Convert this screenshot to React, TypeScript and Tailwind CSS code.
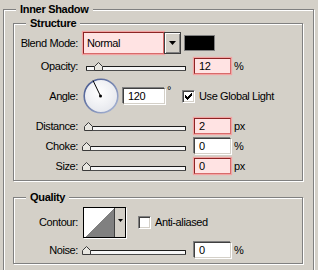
import React from 'react';

// Photoshop "Inner Shadow" layer style panel (classic Windows look)

const Thumb: React.FC<{ x: number }> = ({ x }) => (
  <svg width="9" height="9" viewBox="0 0 9 9" className="absolute top-[4px]" style={{ left: x }}>
    <path d="M4.5 0.5 L8.5 4.5 L8.5 8.5 L0.5 8.5 L0.5 4.5 Z" fill="#e8e6e0" stroke="#3a3a3a" strokeWidth="1" />
  </svg>
);

const Slider: React.FC<{ pos: number }> = ({ pos }) => (
  <div className="relative ml-[4px] w-[108px] self-stretch">
    <div className="mt-[8px] mx-[4px] h-[5px] border border-[#1c1c1c] border-b-[#4a4a4a] bg-[#f6f6f6] rounded-[1px]" />
    <Thumb x={pos} />
  </div>
);

const Field: React.FC<{ value: string; warn?: boolean; wide?: boolean }> = ({ value, warn, wide }) => (
  <div
    className={`${wide ? 'w-[42px]' : 'w-[37px]'} h-[16px] flex items-center pl-[4px] border ${
      warn
        ? 'bg-[#ffe3e3] border-t-[#8c2424] border-l-[#8c2424] border-r-[#d86a6a] border-b-[#d86a6a] shadow-[0_0_1px_1px_#f2a3a3]'
        : 'bg-white border-t-[#404040] border-l-[#404040] border-r-[#d4d0c8] border-b-[#d4d0c8] shadow-[-1px_-1px_0_#808080,1px_1px_0_#fff]'
    }`}
  >
    {value}
  </div>
);

const Check: React.FC<{ checked?: boolean }> = ({ checked }) => (
  <div className="w-[13px] h-[13px] flex items-center justify-center bg-white border border-t-[#808080] border-l-[#808080] border-r-white border-b-white shadow-[inset_1px_1px_0_#404040,inset_-1px_-1px_0_#d4d0c8]">
    {checked && (
      <svg width="7" height="7" viewBox="0 0 7 7" shapeRendering="crispEdges">
        <path d="M0 2 L2 4 L6 0 L7 0 L7 2 L2 7 L0 5 Z" fill="#000" />
      </svg>
    )}
  </div>
);

const Label: React.FC<{ children: React.ReactNode }> = ({ children }) => (
  <span className="w-[64px] shrink-0 text-right">{children}</span>
);

const Group: React.FC<{ title: string; className: string; children: React.ReactNode }> = ({ title, className, children }) => (
  <fieldset className={`border border-[#808080] shadow-[inset_1px_1px_0_#fff,1px_1px_0_#fff] ${className}`}>
    <legend className="ml-[12px] px-[4px] bg-[#d4d0c8] font-bold leading-[14px] tracking-[-0.3px]">{title}</legend>
    {children}
  </fieldset>
);

const Dial = () => (
  <svg width="36" height="36" viewBox="0 0 36 36">
    <defs>
      <linearGradient id="ring" x1="0" y1="0" x2="1" y2="1">
        <stop offset="0" stopColor="#40528a" />
        <stop offset="1" stopColor="#aebbd9" />
      </linearGradient>
      <radialGradient id="face" cx="0.45" cy="0.4" r="0.65">
        <stop offset="0" stopColor="#ffffff" />
        <stop offset="1" stopColor="#e4e6ec" />
      </radialGradient>
    </defs>
    <circle cx="18" cy="18" r="16.8" fill="url(#face)" stroke="url(#ring)" strokeWidth="1.6" />
    <line x1="17.5" y1="18" x2="10" y2="2.5" stroke="#000" strokeWidth="1" />
    <circle cx="17.5" cy="18" r="1.5" fill="#000" />
  </svg>
);

const App: React.FC = () => {
  return (
    <div className="w-[318px] h-[270px] overflow-hidden bg-[#d4d0c8] text-black text-[11px] tracking-[-0.4px] font-['Liberation_Sans',Arial,sans-serif] pt-[2px] pl-[3px]">
      <Group title="Inner Shadow" className="w-[311px] pb-[20px]">
        <Group title="Structure" className="ml-[9px] w-[290px]">
          <div className="flex flex-col gap-[4px] pt-[2px] pb-[6px]">
            <div className="flex items-center h-[22px]">
              <Label>Blend Mode:</Label>
              <div className="ml-[5px] flex w-[98px] h-[22px]">
                <div className="flex-1 flex items-center pl-[3px] bg-[#ffe3e3] border border-t-[#8c2424] border-l-[#8c2424] border-r-[#d86a6a] border-b-[#d86a6a] shadow-[0_0_1px_1px_#f2a3a3]">
                  Normal
                </div>
                <div className="w-[17px] flex items-center justify-center bg-[#d4d0c8] border border-[#404040] shadow-[inset_1px_1px_0_#fff,inset_-1px_-1px_0_#808080]">
                  <svg width="7" height="4" viewBox="0 0 7 4">
                    <polygon points="0,0 7,0 3.5,4" fill="#000" />
                  </svg>
                </div>
              </div>
              <div className="ml-[3px] w-[31px] h-[16px] bg-black border border-[#808080]" />
            </div>

            <div className="flex items-center h-[16px]">
              <Label>Opacity:</Label>
              <Slider pos={12} />
              <div className="ml-[4px]"><Field value="12" warn /></div>
              <span className="ml-[3px]">%</span>
            </div>

            <div className="flex items-center h-[36px]">
              <Label>Angle:</Label>
              <div className="ml-[5px]"><Dial /></div>
              <div className="ml-[4px]"><Field value="120" wide /></div>
              <span className="ml-[2px] w-[14px] self-start mt-[7px] leading-[11px]">°</span>
              <div className="ml-[1px]"><Check checked /></div>
              <span className="ml-[4px]">Use Global Light</span>
            </div>

            <div className="flex items-center h-[16px]">
              <Label>Distance:</Label>
              <Slider pos={2} />
              <div className="ml-[4px]"><Field value="2" warn /></div>
              <span className="ml-[3px]">px</span>
            </div>

            <div className="flex items-center h-[16px]">
              <Label>Choke:</Label>
              <Slider pos={0} />
              <div className="ml-[4px]"><Field value="0" /></div>
              <span className="ml-[3px]">%</span>
            </div>

            <div className="flex items-center h-[16px]">
              <Label>Size:</Label>
              <Slider pos={0} />
              <div className="ml-[4px]"><Field value="0" warn /></div>
              <span className="ml-[3px]">px</span>
            </div>
          </div>
        </Group>

        <Group title="Quality" className="ml-[9px] mt-[9px] w-[290px]">
          <div className="flex flex-col gap-[4px] pt-[3px] pb-[5px]">
            <div className="flex items-center h-[31px]">
              <Label>Contour:</Label>
              <div className="ml-[5px] flex w-[43px] h-[31px] border border-black bg-[#d4d0c8] shadow-[1px_1px_0_#fff]">
                <svg width="30" height="29" viewBox="0 0 30 29" shapeRendering="crispEdges">
                  <rect x="0" y="0" width="30" height="29" fill="#fff" />
                  <polygon points="2,29 30,0 30,29" fill="#808080" />
                </svg>
                <div className="flex-1 flex justify-center pt-[11px] border-l border-[#404040]">
                  <svg width="5" height="3" viewBox="0 0 5 3">
                    <polygon points="0,0 5,0 2.5,3" fill="#000" />
                  </svg>
                </div>
              </div>
              <div className="ml-[12px]"><Check /></div>
              <span className="ml-[4px]">Anti-aliased</span>
            </div>

            <div className="flex items-center h-[16px]">
              <Label>Noise:</Label>
              <Slider pos={0} />
              <div className="ml-[4px]"><Field value="0" /></div>
              <span className="ml-[3px]">%</span>
            </div>
          </div>
        </Group>
      </Group>
    </div>
  );
};

export default App;
